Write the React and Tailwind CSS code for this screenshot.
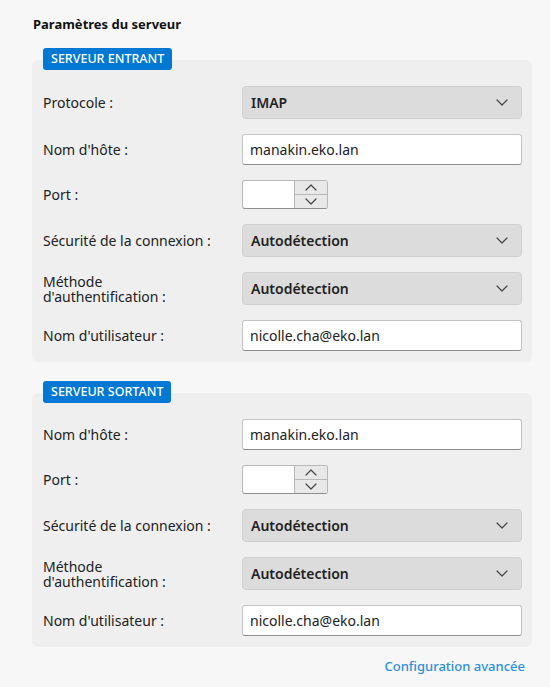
import React from 'react';

const FONT = "font-['Noto_Sans','Open_Sans','Liberation_Sans',sans-serif]";

function Chevron({ up = false, className = '' }) {
  return (
    <svg width="12" height="7" viewBox="0 0 12 7" className={className} fill="none">
      <polyline
        points={up ? '1,6 6,1 11,6' : '1,1 6,6 11,1'}
        stroke="#444"
        strokeWidth="1.2"
        strokeLinecap="round"
        strokeLinejoin="round"
      />
    </svg>
  );
}

function Select({ value }) {
  return (
    <div className="flex h-[33px] w-[280px] items-center justify-between rounded-[4px] border border-[#d0d0d0] bg-[#dcdcdc] pl-[8px] pr-[13px]">
      <span className="text-[14px] font-semibold text-[#222]">{value}</span>
      <Chevron />
    </div>
  );
}

function TextInput({ value }) {
  return (
    <div className="flex h-[31px] w-[280px] items-center rounded-[3px] border border-[#c4c4c4] border-b-[#8e8e8e] bg-white pl-[7px]">
      <span className="text-[14px] text-[#222]">{value}</span>
    </div>
  );
}

function PortInput() {
  return (
    <div className="flex h-[29px] w-[86px] overflow-hidden rounded-[3px] border border-[#b8b8b8] border-b-[#8e8e8e] bg-white">
      <div className="flex-1" />
      <div className="flex w-[33px] flex-col border-l border-[#b8b8b8] bg-[#e8e8e8]">
        <div className="flex flex-1 items-center justify-center border-b border-[#b8b8b8]">
          <Chevron up />
        </div>
        <div className="flex flex-1 items-center justify-center">
          <Chevron />
        </div>
      </div>
    </div>
  );
}

function Row({ label, children }) {
  return (
    <div className="flex items-center">
      <div className="w-[199px] text-[14px] leading-[15px] text-[#222]">{label}</div>
      {children}
    </div>
  );
}

function ServerSection({ title, incoming }) {
  return (
    <div>
      <span className="relative z-10 ml-[11px] block h-[22px] w-fit rounded-[3px] bg-[#0078d4] px-[8px] text-[12.5px] leading-[22px] font-medium text-white">
        {title}
      </span>
      <div className="-mt-[10px] flex w-[500px] flex-col gap-[15px] rounded-[6px] bg-[#efefef] pb-[11px] pl-[11px] pr-[10px] pt-[26px]">
        {incoming && (
          <Row label="Protocole :">
            <Select value="IMAP" />
          </Row>
        )}
        <Row label="Nom d'hôte :">
          <TextInput value="manakin.eko.lan" />
        </Row>
        <Row label="Port :">
          <PortInput />
        </Row>
        <Row label="Sécurité de la connexion :">
          <Select value="Autodétection" />
        </Row>
        <Row label={<>Méthode<br />d'authentification :</>}>
          <Select value="Autodétection" />
        </Row>
        <Row label="Nom d'utilisateur :">
          <TextInput value="nicolle.cha@eko.lan" />
        </Row>
      </div>
    </div>
  );
}

export default function App() {
  return (
    <div className={`${FONT} min-h-[687px] w-[550px] bg-[#f7f7f7] pl-[32px] pt-[15px]`}>
      <h1 className="pl-[1px] text-[13px] font-bold leading-[18px] text-[#111]">Paramètres du serveur</h1>
      <div className="mt-[15px]">
        <ServerSection title="SERVEUR ENTRANT" incoming />
      </div>
      <div className="mt-[19px]">
        <ServerSection title="SERVEUR SORTANT" />
      </div>
      <div className="mt-[10px] w-[500px] pr-[7px] text-right text-[13px] leading-[18px]">
        <a className="font-medium text-[#2b8fe0]">Configuration avancée</a>
      </div>
    </div>
  );
}
